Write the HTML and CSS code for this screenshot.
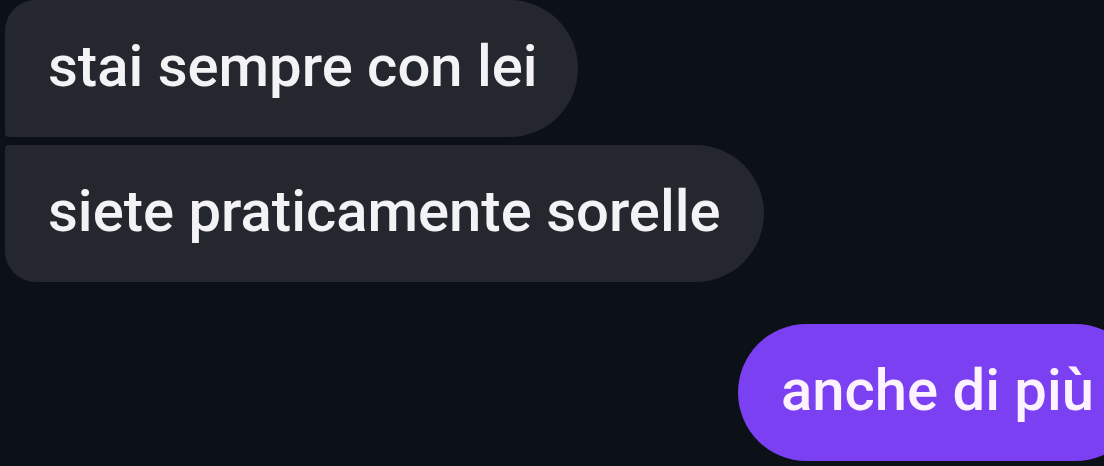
FILE: index.html
```html
<!DOCTYPE html>
<html lang="it">
<head>
<meta charset="utf-8">
<title>Chat</title>
<link rel="stylesheet" href="styles.css">
</head>
<body>
<div class="chat">
  <div class="msg in first">stai sempre con lei</div>
  <div class="msg in last">siete praticamente sorelle</div>
  <div class="msg out">anche di più</div>
</div>
</body>
</html>
```
FILE: styles.css
```css
html, body {
  margin: 0;
  padding: 0;
  background: #0c1017;
  overflow: hidden;
}
body {
  width: 1104px;
  height: 466px;
}
.chat {
  display: flex;
  flex-direction: column;
  align-items: flex-start;
  padding-left: 5px;
}
.msg {
  font-family: Roboto, "Liberation Sans", sans-serif;
  font-weight: 500;
  font-size: 58px;
  height: 137px;
  line-height: 133px;
  padding: 0 43px 4px 43px;
  box-sizing: border-box;
  color: #f3f3f5;
  white-space: nowrap;
}
.in {
  background: #25272f;
}
.first {
  border-radius: 31px 69px 69px 4px;
  padding-right: 40px;
}
.last {
  margin-top: 8px;
  border-radius: 4px 69px 69px 31px;
}
.out {
  align-self: flex-end;
  margin-top: 42px;
  margin-right: -40px;
  background: #7b40f1;
  color: #fdf2ff;
  border-radius: 69px;
  padding-right: 50px;
}
```
